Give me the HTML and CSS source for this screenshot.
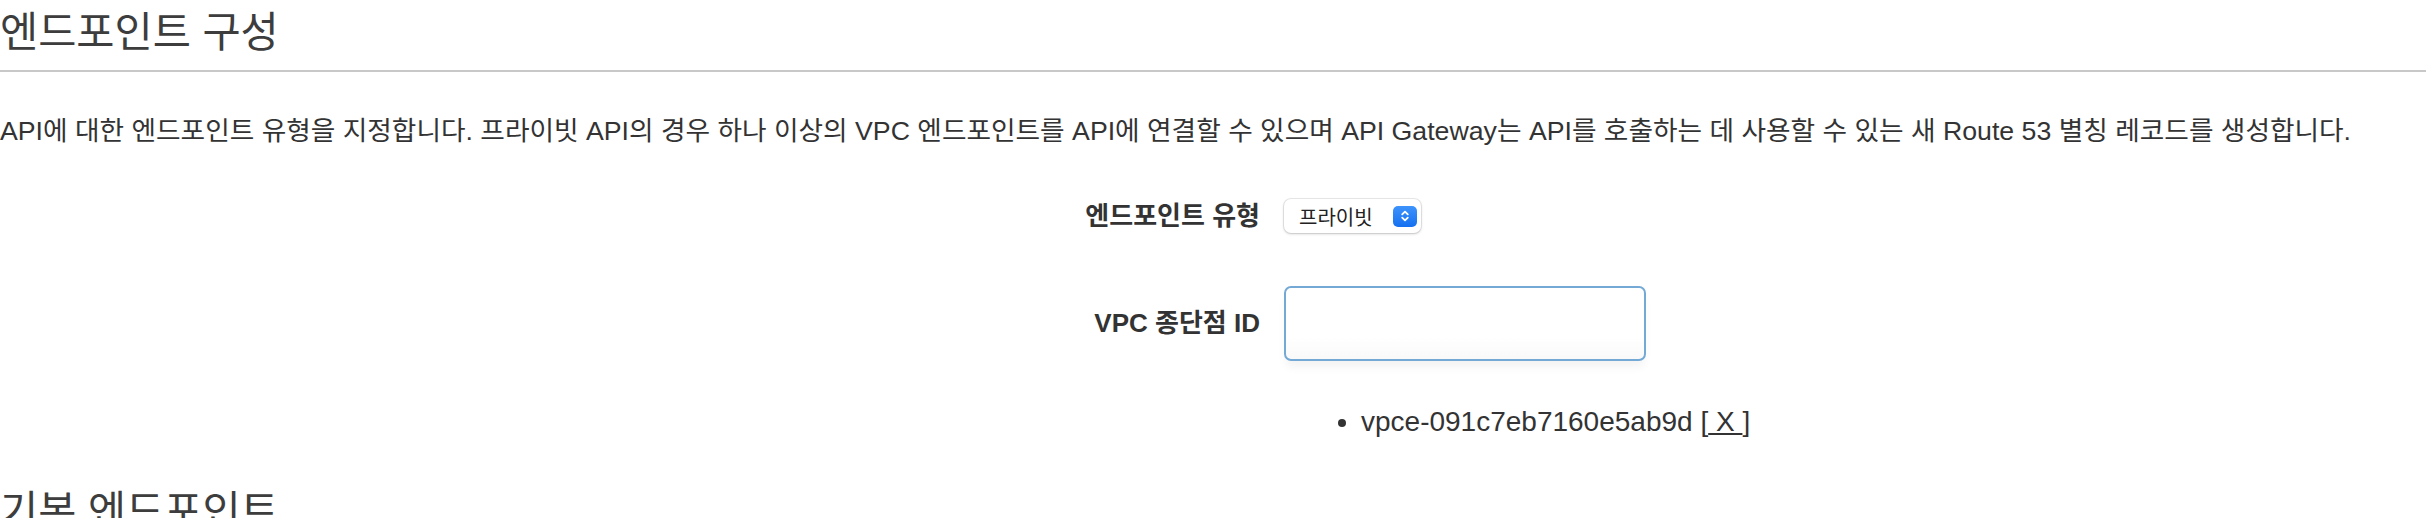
FILE: index.html
```html
<!DOCTYPE html>
<html lang="ko">
<head>
<meta charset="utf-8">
<title>엔드포인트 구성</title>
<link rel="stylesheet" href="styles.css">
</head>
<body>
<section class="section">
  <h2 class="section-title">엔드포인트 구성</h2>
  <p class="section-desc">API에 대한 엔드포인트 유형을 지정합니다. 프라이빗 API의 경우 하나 이상의 VPC 엔드포인트를 API에 연결할 수 있으며 API Gateway는 API를 호출하는 데 사용할 수 있는 새 Route 53 별칭 레코드를 생성합니다.</p>
  <div class="form">
    <div class="form-row row-type">
      <label class="form-label">엔드포인트 유형</label>
      <div class="form-control">
        <div class="select">
          <span class="select-value">프라이빗</span>
          <span class="select-btn">
            <svg width="12" height="16" viewBox="0 0 12 16" aria-hidden="true"><path d="M3.2 6.4 L6 3.6 L8.8 6.4 M3.2 9.6 L6 12.4 L8.8 9.6" fill="none" stroke="#fff" stroke-width="1.8" stroke-linecap="round" stroke-linejoin="round"/></svg>
          </span>
        </div>
      </div>
    </div>
    <div class="form-row row-vpc">
      <label class="form-label" for="vpc">VPC 종단점 ID</label>
      <div class="form-control">
        <input id="vpc" class="text-input" type="text">
      </div>
    </div>
    <div class="form-row row-list">
      <span class="form-label"></span>
      <ul class="endpoint-list">
        <li>vpce-091c7eb7160e5ab9d [<a class="remove" href="#">&nbsp;X&nbsp;</a>]</li>
      </ul>
    </div>
  </div>
</section>
<section class="section">
  <h2 class="section-title next">기본 엔드포인트</h2>
</section>
</body>
</html>
```
FILE: styles.css
```css
html, body {
  margin: 0;
  padding: 0;
  background: #fff;
}
body {
  font-family: "Liberation Sans", "Noto Sans CJK KR", sans-serif;
  color: #333;
  width: 2426px;
  overflow: hidden;
}
.section-title {
  margin: 0;
  padding: 0 0 4px 0;
  height: 66px;
  font-size: 41.5px;
  line-height: 66px;
  font-weight: 400;
  color: #3d3d3d;
  border-bottom: 2px solid #c8c8c8;
}
.section-title.next {
  border-bottom: none;
  margin-top: 40px;
}
.section-desc {
  margin: 0;
  padding-top: 42px;
  font-size: 26.7px;
  line-height: 34px;
  color: #333;
  white-space: nowrap;
}
.form {
  display: grid;
  grid-template-columns: 1260px 1fr;
  column-gap: 24px;
  padding-top: 48px;
}
.form-row {
  display: contents;
}
.form-label {
  justify-self: end;
  align-self: center;
  font-size: 26px;
  font-weight: 700;
  color: #333;
}
.form-control {
  display: flex;
  align-items: center;
}
.row-type .form-label,
.row-type .form-control {
  height: 40px;
}
.row-type .form-label { line-height: 40px; }
.select {
  box-sizing: border-box;
  width: 137px;
  height: 34px;
  display: flex;
  align-items: center;
  justify-content: space-between;
  padding: 0 4px 0 15px;
  border-radius: 7px;
  background: #fff;
  box-shadow: 0 0 0 1px rgba(0,0,0,0.08), 0 1px 3px rgba(0,0,0,0.18);
  font-size: 20px;
  color: #222;
}
.select-btn {
  width: 24px;
  height: 21px;
  border-radius: 5px;
  background: linear-gradient(#3e93fb, #1470f0);
  display: flex;
  align-items: center;
  justify-content: center;
}
.row-vpc .form-label,
.row-vpc .form-control {
  margin-top: 50px;
}
.row-vpc .form-label {
  position: relative;
  top: -3px;
}
.text-input {
  box-sizing: border-box;
  width: 362px;
  height: 75px;
  border: 2px solid #74a9d6;
  border-radius: 7px;
  background: linear-gradient(#fff 70%, #f9f9f9);
  box-shadow: 0 8px 10px -2px rgba(0,0,0,0.05);
  outline: none;
  font-size: 24px;
  padding: 0 12px;
}
.endpoint-list {
  margin: 44px 0 0 0;
  padding: 0 0 0 77px;
  font-size: 28px;
  line-height: 34px;
  color: #333;
}
.remove {
  color: #333;
  text-decoration: underline;
}
```
